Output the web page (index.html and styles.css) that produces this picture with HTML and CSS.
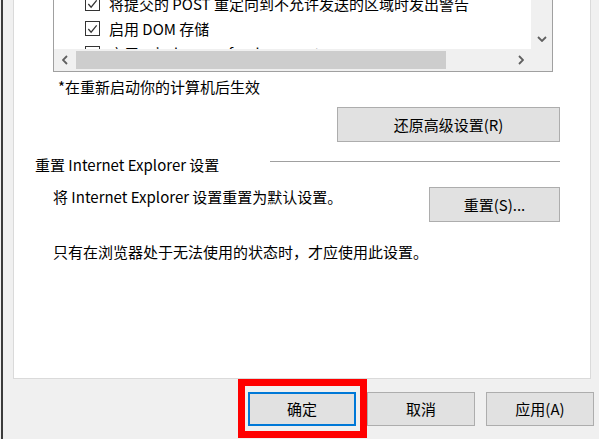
FILE: index.html
```html
<!DOCTYPE html>
<html lang="zh-CN">
<head>
<meta charset="utf-8">
<title>Internet 选项 - 高级</title>
<link rel="stylesheet" href="styles.css">
</head>
<body>
<div class="frame">
  <div class="panel">
    <div class="list">
      <div class="list-rows">
        <div class="row"><span class="cb"><svg viewBox="0 0 14 14" width="14" height="14"><polyline points="2.5,7 5.5,10.5 11.5,3" fill="none" stroke="#333" stroke-width="1.3"/></svg></span><span>将提交的 POST 重定向到不允许发送的区域时发出警告</span></div>
        <div class="row"><span class="cb"><svg viewBox="0 0 14 14" width="14" height="14"><polyline points="2.5,7 5.5,10.5 11.5,3" fill="none" stroke="#333" stroke-width="1.3"/></svg></span><span>启用 DOM 存储</span></div>
        <div class="row"><span class="cb"></span><span>启用 Windows Defender SmartScreen</span></div>
      </div>
      <div class="vbar">
        <div class="arrow-btn"><svg viewBox="0 0 10 6" width="10" height="6"><polyline points="1,1 5,5 9,1" fill="none" stroke="#606060" stroke-width="1.8"/></svg></div>
      </div>
      <div class="hbar">
        <div class="arrow-btn"><svg viewBox="0 0 6 10" width="6" height="10"><polyline points="5,1 1,5 5,9" fill="none" stroke="#606060" stroke-width="1.8"/></svg></div>
        <div class="thumb"></div>
        <div class="track"></div>
        <div class="arrow-btn"><svg viewBox="0 0 6 10" width="6" height="10"><polyline points="1,1 5,5 1,9" fill="none" stroke="#606060" stroke-width="1.8"/></svg></div>
      </div>
      <div class="corner"></div>
    </div>
    <p class="note">*在重新启动你的计算机后生效</p>
    <div class="btn-row">
      <button class="btn btn-restore">还原高级设置(R)</button>
    </div>
    <div class="group-head">
      <span>重置 Internet Explorer 设置</span>
      <span class="group-line"></span>
    </div>
    <div class="reset-row">
      <span class="text">将 Internet Explorer 设置重置为默认设置。</span>
      <button class="btn btn-reset">重置(S)...</button>
    </div>
    <p class="hint">只有在浏览器处于无法使用的状态时，才应使用此设置。</p>
  </div>
  <div class="footer">
    <button class="btn dlg focused">确定</button>
    <button class="btn dlg">取消</button>
    <button class="btn dlg">应用(A)</button>
  </div>
</div>
<div class="highlight"></div>
</body>
</html>
```
FILE: styles.css
```css
* { box-sizing: border-box; }
html, body {
  margin: 0;
  padding: 0;
}
body {
  width: 599px;
  height: 439px;
  overflow: hidden;
  background: #f0f0f0;
  font-family: "Noto Sans CJK SC", "Noto Sans", sans-serif;
  font-size: 15px;
  line-height: 20px;
  color: #000;
  position: relative;
}
.frame {
  margin-left: 1px;
  border-left: 2px solid #3c3c3c;
  height: 439px;
  padding-left: 10px;
}
.panel {
  width: 578px;
  height: 379px;
  background: #fff;
  border: 1px solid #dadada;
  border-top: none;
  display: flex;
  flex-direction: column;
}
.list {
  margin-top: -10px;
  margin-left: 39px;
  width: 500px;
  height: 82px;
  border: 1px solid #a0a0a0;
  display: grid;
  grid-template-columns: 477px 21px;
  grid-template-rows: 58px 22px;
  overflow: hidden;
}
.list-rows {
  overflow: hidden;
  background: #fff;
}
.row {
  height: 25px;
  display: flex;
  align-items: center;
  padding-left: 31px;
  white-space: nowrap;
}
.cb {
  width: 15px;
  height: 15px;
  border: 1px solid #333;
  background: #fff;
  margin-right: 9px;
  display: flex;
  align-items: center;
  justify-content: center;
  flex: none;
}
.cb svg { display: block; }
.vbar {
  background: #f0f0f0;
  display: flex;
  flex-direction: column;
  justify-content: flex-end;
}
.arrow-btn {
  width: 21px;
  height: 21px;
  display: flex;
  align-items: center;
  justify-content: center;
  flex: none;
}
.hbar {
  background: #f0f0f0;
  display: flex;
  align-items: center;
}
.thumb {
  width: 370px;
  height: 18px;
  margin-left: 1px;
  background: #cdcdcd;
}
.track { flex: 1; }
.corner { background: #f0f0f0; }
.note {
  margin: 5px 0 0 44px;
}
.btn {
  font-family: inherit;
  font-size: 15px;
  color: #000;
  background: #e1e1e1;
  border: 1px solid #adadad;
  padding: 0;
  margin: 0;
  line-height: 20px;
}
.btn-row {
  display: flex;
  justify-content: flex-end;
  margin: 10px 30px 0 0;
}
.btn-restore {
  width: 223px;
  height: 35px;
}
.group-head {
  display: flex;
  justify-content: space-between;
  margin: 13px 0 0 21px;
}
.group-line {
  width: 290px;
  height: 1px;
  background: #a0a0a0;
  margin: 6px 30px 0 0;
}
.reset-row {
  display: flex;
  justify-content: space-between;
  align-items: flex-start;
  margin: 12px 30px 0 39px;
}
.btn-reset {
  width: 131px;
  height: 35px;
}
.hint {
  margin: 20px 0 0 39px;
}
.footer {
  display: flex;
  justify-content: flex-end;
  gap: 11px;
  margin: 13px 5px 0 0;
}
.dlg {
  width: 108px;
  height: 34px;
}
.dlg.focused {
  border: 2px solid #0078d7;
}
.highlight {
  position: absolute;
  left: 238px;
  top: 379px;
  width: 129px;
  height: 59px;
  border: 7px solid #ff0000;
}
```
